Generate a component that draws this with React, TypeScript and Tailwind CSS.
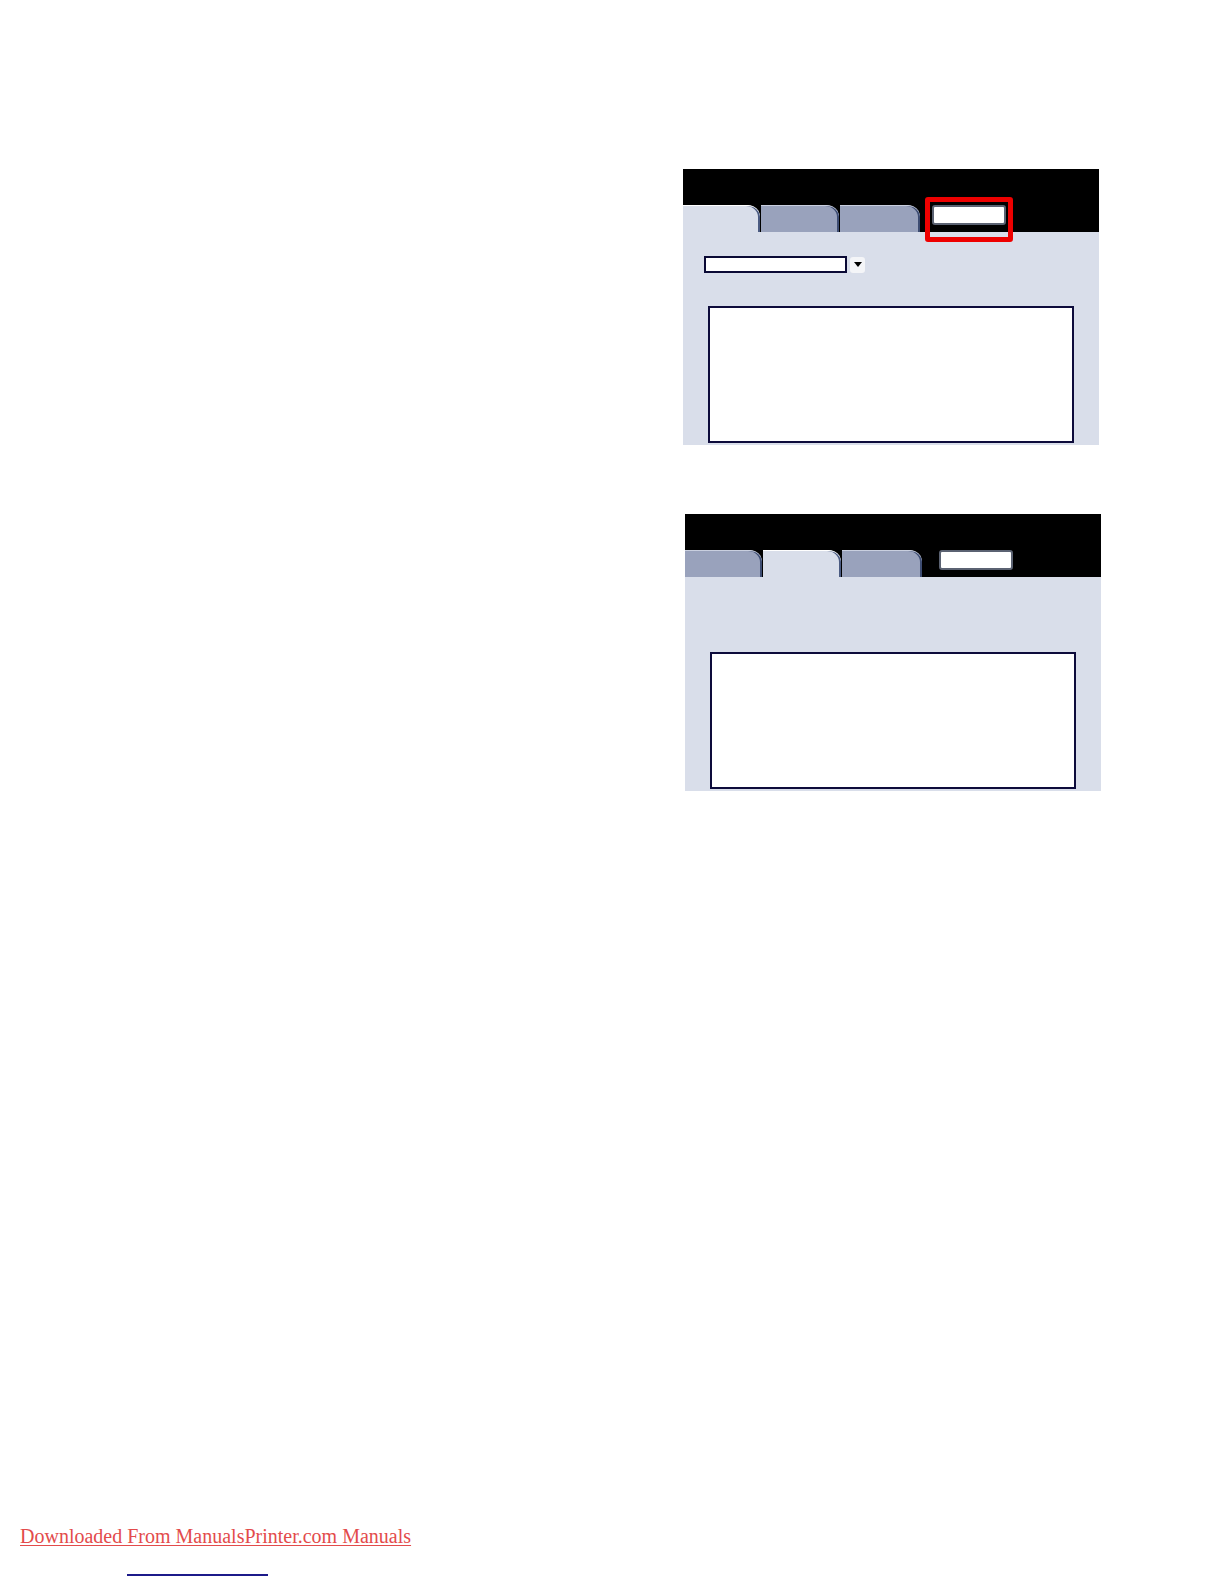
import React from 'react';

// Вкладка с закруглённым правым краем
function Tab({ active, w }: { active: boolean; w: number }) {
  return (
    <div
      className={
        'h-full rounded-tr-[12px] border-t ' +
        (active
          ? 'bg-[#d9deea] border-t-white shadow-[inset_-2px_0_0_#4b5b82]'
          : 'bg-[#99a2bc] border-t-[#c9cfdf] shadow-[inset_-2px_0_0_#3d4c72]')
      }
      style={{ width: w }}
    />
  );
}

function Panel({ active, dropdown, highlight, boxTop, btnLeft }: {
  active: number; dropdown?: boolean; highlight?: boolean; boxTop: number; btnLeft: number;
}) {
  const widths = [77, 78, 80];
  return (
    <div className="w-[416px] flex flex-col">
      {/* Шапка */}
      <div className="bg-black h-[63px] flex flex-col justify-end">
        <div className="h-[27px] flex items-stretch">
          {widths.map((w, i) => (
            <div key={i} className="h-full mr-[1px]">
              <Tab active={active === i} w={w} />
            </div>
          ))}
          <div className="relative self-start" style={{ marginLeft: btnLeft }}>
            <div className="w-[74px] h-[20px] bg-white border-2 border-[#5b6272] rounded-[3px]" />
            {highlight && (
              <div className="absolute -left-[7px] -top-[8px] w-[88px] h-[45px] border-[5px] border-[#ee0000] rounded-[3px]" />
            )}
          </div>
        </div>
      </div>
      {/* Тело */}
      <div className="bg-[#d9deea] flex flex-col px-[25px] pb-[2px]">
        {dropdown ? (
          <div className="flex items-center gap-[3px] mt-[24px] -ml-[4px] h-[17px]">
            <div className="w-[143px] h-[17px] bg-white border-2 border-[#0a0935]" />
            <div className="w-[15px] h-[16px] bg-[#f4f5f8] rounded-[3px] flex items-center justify-center">
              <div className="w-0 h-0 border-l-[4px] border-r-[4px] border-t-[5px] border-l-transparent border-r-transparent border-t-black" />
            </div>
          </div>
        ) : null}
        <div
          className="h-[137px] bg-white border-2 border-[#0d0b3b]"
          style={{ marginTop: boxTop }}
        />
      </div>
    </div>
  );
}

export default function App() {
  return (
    <div className="w-[1224px] h-[1584px] bg-white flex flex-col" style={{ fontFamily: '"Liberation Serif", serif' }}>
      <div className="pl-[683px] pt-[169px]">
        <Panel active={0} dropdown highlight boxTop={33} btnLeft={11} />
      </div>
      <div className="pl-[685px] pt-[69px]">
        <Panel active={1} boxTop={75} btnLeft={16} />
      </div>
      <div className="mt-auto pl-[20px] pb-[8px]">
        <a href="#" className="text-[20px] leading-[24px] text-[#e34b4b] underline decoration-1 underline-offset-2">
          Downloaded From ManualsPrinter.com Manuals
        </a>
        <div className="ml-[107px] mt-[24px] w-[141px] h-[2px] bg-[#1c1a8a]" />
      </div>
    </div>
  );
}
